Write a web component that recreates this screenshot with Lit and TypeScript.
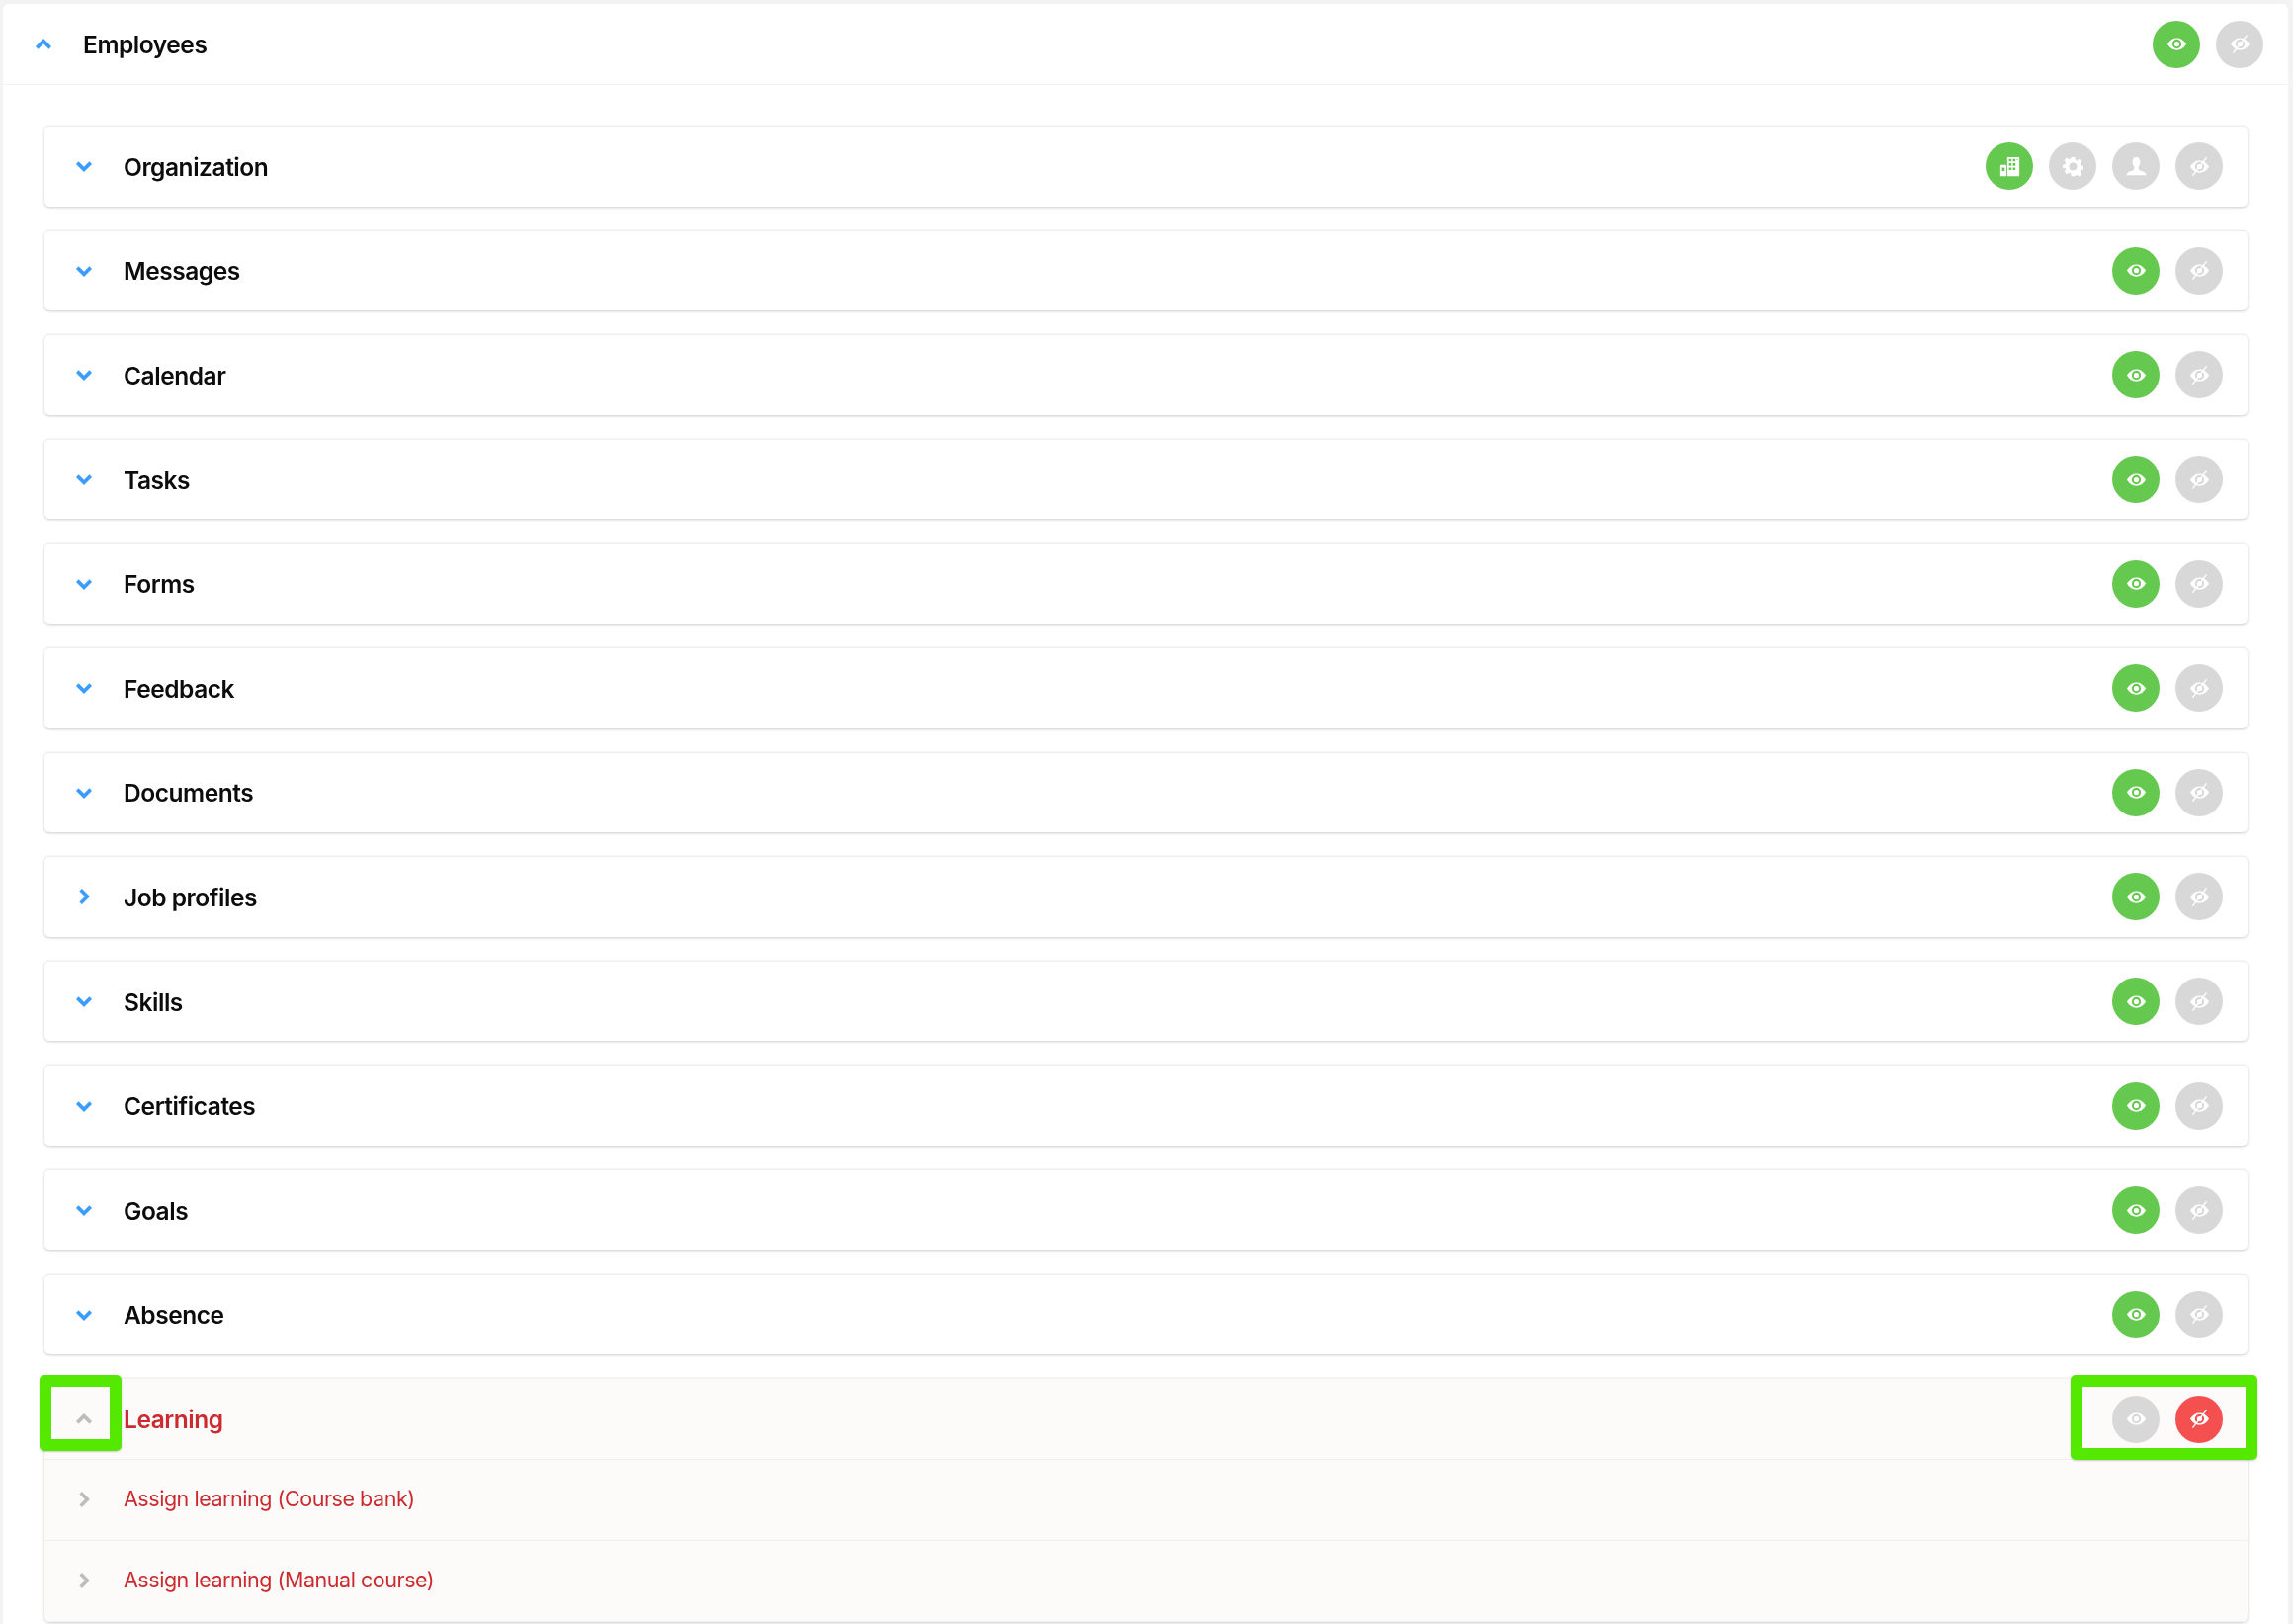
import { LitElement, html, css, svg } from "lit";
import { customElement } from "lit/decorators.js";

const eye = (cut: boolean) => svg`<svg class="ic" viewBox="0 0 24 24" aria-hidden="true">
  <path fill="#fff" fill-rule="evenodd" d="M1 12C4 7.2 7.8 5 12 5s8 2.2 11 7c-3 4.8-6.800 7-11 7s-8-2.200-11-7zm11-5.300a5.300 5.300 0 1 0 0 10.600 5.300 5.300 0 0 0 0-10.600zm0 2.300a3 3 0 1 1 0 6 3 3 0 0 1 0-6z"/>
  ${cut ? svg`<path d="M20 1.500 4 22.500" stroke="#fff" stroke-width="1.600" fill="none"/>` : ""}
</svg>`;
const building = svg`<svg class="ic" viewBox="0 0 24 24" aria-hidden="true"><path fill="#fff" fill-rule="evenodd" d="M9 1h14v22H9zM11 3v3h3V3zm4.500 0v3h3V3zM20 3v1.500h1V3zM11 8v3h3V8zm4.500 0v3h3V8zM11 13v3h3v-3zm4.500 0v3h3v-3zM1 11c0-.6.400-1 1-1h5c.6 0 1 .400 1 1v12H1zm2 2v4h3v-4z"/></svg>`;
const gear = svg`<svg class="ic" viewBox="0 0 24 24" aria-hidden="true"><path fill="#fff" fill-rule="evenodd" d="M10 1h4l.7 3.200 1.900.8 2.800-1.800 2.800 2.800-1.800 2.800.8 1.900 3.200.700v4l-3.200.7-.8 1.900 1.800 2.800-2.800 2.800-2.800-1.800-1.900.8L14 23h-4l-.7-3.200-1.900-.8-2.800 1.800-2.800-2.800 1.800-2.800-.8-1.900L-.4 14v-4l3.200-.7.8-1.900-1.800-2.800 2.800-2.800 2.800 1.800 1.900-.8zM12 7.500a4.500 4.500 0 1 0 0 9 4.500 4.500 0 0 0 0-9z"/></svg>`;
const person = svg`<svg class="ic" viewBox="0 0 24 24" aria-hidden="true"><path fill="#fff" d="M12 1c2.800 0 4.500 2.400 4.500 5.500 0 2.400-.9 4.500-2 5.800v2.200c0 1.200 1.200 1.800 3.500 2.500 3 .9 5 1.800 5.500 5H.5c.5-3.200 2.500-4.100 5.500-5 2.300-.7 3.500-1.300 3.500-2.500v-2.200c-1.100-1.300-2-3.400-2-5.800C7.500 3.400 9.200 1 12 1z"/></svg>`;

type Btn = { icon: unknown; tone: "on" | "off" | "bad" };
const visible: Btn[] = [{ icon: eye(false), tone: "on" }, { icon: eye(true), tone: "off" }];
const rows: { name: string; chev: "down" | "right"; btns: Btn[] }[] = [
  { name: "Organization", chev: "down", btns: [
    { icon: building, tone: "on" }, { icon: gear, tone: "off" }, { icon: person, tone: "off" }, { icon: eye(true), tone: "off" },
  ] },
  ...["Messages", "Calendar", "Tasks", "Forms", "Feedback", "Documents"].map((name) => ({ name, chev: "down" as const, btns: visible })),
  { name: "Job profiles", chev: "right", btns: visible },
  ...["Skills", "Certificates", "Goals", "Absence"].map((name) => ({ name, chev: "down" as const, btns: visible })),
];

const chevron = (dir: "up" | "down" | "right", muted = false) => {
  const d = dir === "up" ? "M2 11 8 5l6 6" : dir === "down" ? "M2 5l6 6 6-6" : "M5 2l6 6-6 6";
  return svg`<svg class="chev ${muted ? "muted" : ""}" viewBox="0 0 16 16" aria-hidden="true"><path d=${d}/></svg>`;
};

@customElement("app-root")
export class AppRoot extends LitElement {
  static styles = css`
    :host { display: block; height: 1643px; overflow: hidden; box-sizing: border-box; background: #f3f3f3; padding: 4px 5px 0 3px; font-family: "Inter", "Liberation Sans", sans-serif; color: #0c0c0c; }
    .panel { background: #fff; border-radius: 6px 6px 0 0; height: 1700px; filter: blur(0.4px); }
    .top { height: 81px; display: flex; align-items: center; padding: 0 25px 0 32px; border-bottom: 1px solid #f2f2f2; }
    .top .title { margin-left: 31px; }
    .body { padding: 41px 41px 0 42px; display: flex; flex-direction: column; gap: 24px; }
    .card { background: #fff; border-radius: 5px; border-top: 1px solid #efefef; box-shadow: 0 1px 3px rgba(0,0,0,.2), 0 0 1px rgba(0,0,0,.06); }
    .row { height: 80.6px; box-sizing: border-box; display: flex; align-items: center; padding: 0 25px 0 31px; }
    .title { flex: 1; margin-left: 31px; padding-top: 1px; font-size: 24.5px; font-weight: 600; line-height: 32px; letter-spacing: -0.45px; }
    .btns { display: flex; gap: 16px; }
    .btn { width: 48px; height: 48px; border-radius: 50%; display: flex; align-items: center; justify-content: center; }
    .on { background: #66c94f; }
    .off { background: #d8d8d8; }
    .bad { background: #f55050; }
    .ic { width: 21px; height: 21px; display: block; }
    .chev { width: 18px; height: 18px; display: block; fill: none; stroke: #3b9cff; stroke-width: 3.2; }
    .chev.muted { stroke: #bdbdbd; }
    .alert { background: #fcfbfa; position: relative; }
    .alert .title { color: #cc2a2f; }
    .alert .off { background: #d9d8d8; }
    .alert .row { border-bottom: 1px solid #f2f0ef; height: 82px; }
    .alert .row:last-of-type { border-bottom: 0; }
    .alert .row.subrow { padding-bottom: 2px; }
    .alert .sub { padding: 0 0 1px; font-size: 21.5px; font-weight: 400; letter-spacing: -0.46px; }
    .mark { position: absolute; box-sizing: border-box; border: 12px solid #55e800; border-radius: 5px; box-shadow: 0 1px 2px rgba(0,0,0,.2); }
    .mark.a { left: -5px; top: -4px; width: 83px; height: 77px; }
    .mark.b { right: -10px; top: -4px; width: 189px; height: 86px; }
  `;

  private buttons(btns: Btn[]) {
    return html`<div class="btns">${btns.map((b) => html`<span class="btn ${b.tone}">${b.icon}</span>`)}</div>`;
  }

  render() {
    return html`<div class="panel">
      <div class="top">
        ${chevron("up")}
        <span class="title">Employees</span>
        ${this.buttons(visible)}
      </div>
      <div class="body">
        ${rows.map((r) => html`<div class="card"><div class="row">
          ${chevron(r.chev)}
          <span class="title">${r.name}</span>
          ${this.buttons(r.btns)}
        </div></div>`)}
        <div class="card alert">
          <div class="row">
            ${chevron("up", true)}
            <span class="title">Learning</span>
            ${this.buttons([{ icon: eye(false), tone: "off" }, { icon: eye(true), tone: "bad" }])}
          </div>
          <div class="row subrow">${chevron("right", true)}<span class="title sub">Assign learning (Course bank)</span></div>
          <div class="row subrow">${chevron("right", true)}<span class="title sub">Assign learning (Manual course)</span></div>
          <div class="mark a"></div>
          <div class="mark b"></div>
        </div>
      </div>
    </div>`;
  }
}
